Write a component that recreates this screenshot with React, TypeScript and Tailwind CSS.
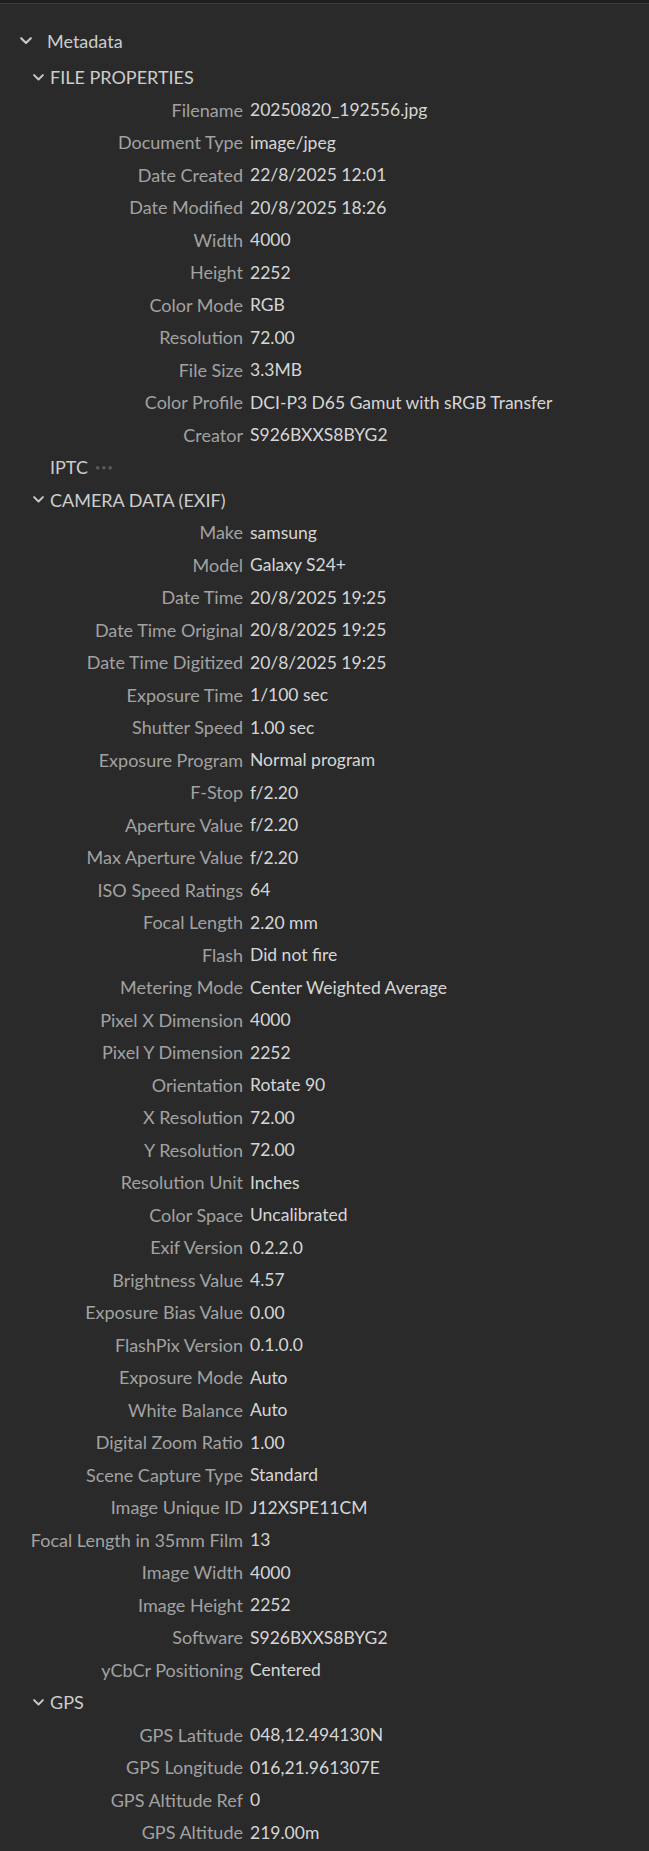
import React from "react";

type Row = [string, string];

const fileProps: Row[] = [
  ["Filename", "20250820_192556.jpg"],
  ["Document Type", "image/jpeg"],
  ["Date Created", "22/8/2025 12:01"],
  ["Date Modified", "20/8/2025 18:26"],
  ["Width", "4000"],
  ["Height", "2252"],
  ["Color Mode", "RGB"],
  ["Resolution", "72.00"],
  ["File Size", "3.3MB"],
  ["Color Profile", "DCI-P3 D65 Gamut with sRGB Transfer"],
  ["Creator", "S926BXXS8BYG2"],
];

const exif: Row[] = [
  ["Make", "samsung"],
  ["Model", "Galaxy S24+"],
  ["Date Time", "20/8/2025 19:25"],
  ["Date Time Original", "20/8/2025 19:25"],
  ["Date Time Digitized", "20/8/2025 19:25"],
  ["Exposure Time", "1/100 sec"],
  ["Shutter Speed", "1.00 sec"],
  ["Exposure Program", "Normal program"],
  ["F-Stop", "f/2.20"],
  ["Aperture Value", "f/2.20"],
  ["Max Aperture Value", "f/2.20"],
  ["ISO Speed Ratings", "64"],
  ["Focal Length", "2.20 mm"],
  ["Flash", "Did not fire"],
  ["Metering Mode", "Center Weighted Average"],
  ["Pixel X Dimension", "4000"],
  ["Pixel Y Dimension", "2252"],
  ["Orientation", "Rotate 90"],
  ["X Resolution", "72.00"],
  ["Y Resolution", "72.00"],
  ["Resolution Unit", "Inches"],
  ["Color Space", "Uncalibrated"],
  ["Exif Version", "0.2.2.0"],
  ["Brightness Value", "4.57"],
  ["Exposure Bias Value", "0.00"],
  ["FlashPix Version", "0.1.0.0"],
  ["Exposure Mode", "Auto"],
  ["White Balance", "Auto"],
  ["Digital Zoom Ratio", "1.00"],
  ["Scene Capture Type", "Standard"],
  ["Image Unique ID", "J12XSPE11CM"],
  ["Focal Length in 35mm Film", "13"],
  ["Image Width", "4000"],
  ["Image Height", "2252"],
  ["Software", "S926BXXS8BYG2"],
  ["yCbCr Positioning", "Centered"],
];

const gps: Row[] = [
  ["GPS Latitude", "048,12.494130N"],
  ["GPS Longitude", "016,21.961307E"],
  ["GPS Altitude Ref", "0"],
  ["GPS Altitude", "219.00m"],
];

function Chevron({ size = 10 }: { size?: number }) {
  return (
    <svg width={size} height={size * 0.6} viewBox="0 0 10 6" fill="none">
      <polyline points="1,1 5,5 9,1" stroke="#c8c8c8" strokeWidth="1.8" strokeLinecap="round" strokeLinejoin="round" />
    </svg>
  );
}

function Section({ title }: { title: string }) {
  return (
    <div className="flex h-[32.5px] items-center pl-[33px] text-[#cdcdcd]">
      <span className="flex w-[17px] items-center">
        <Chevron size={11} />
      </span>
      <span>{title}</span>
    </div>
  );
}

function Rows({ rows }: { rows: Row[] }) {
  return (
    <>
      {rows.map(([label, value]) => (
        <div key={label} className="flex h-[32.5px] items-center whitespace-nowrap">
          <span className="w-[243px] shrink-0 text-right text-[#a2a2a2]">{label}</span>
          <span className="ml-[7px] text-[17.5px] text-[#d6d6d6]">{value}</span>
        </div>
      ))}
    </>
  );
}

export default function App() {
  return (
    <div
      className="min-h-[1851px] w-[649px] bg-[#2a2a2a] text-[18px] leading-none"
      style={{ fontFamily: "Lato, 'Noto Sans', sans-serif" }}
    >
      <div className="h-[4px] border-b border-[#3e3e3e] bg-[#1e1e1e]" />
      <div className="pt-[21px]">
        <div className="flex h-[32px] items-center pl-[20px] text-[#cdcdcd]">
          <span className="flex w-[27px] items-center">
            <Chevron size={12} />
          </span>
          <span>Metadata</span>
        </div>
        <div className="mt-[4px]">
          <Section title="FILE PROPERTIES" />
          <Rows rows={fileProps} />
          <div className="flex h-[32.5px] items-center pl-[50px] text-[#cdcdcd]">
            <span>IPTC</span>
            <span className="ml-[7px] text-[9px] tracking-[1px] text-[#5c5c5c]">•••</span>
          </div>
          <Section title="CAMERA DATA (EXIF)" />
          <Rows rows={exif} />
          <Section title="GPS" />
          <Rows rows={gps} />
        </div>
      </div>
    </div>
  );
}
